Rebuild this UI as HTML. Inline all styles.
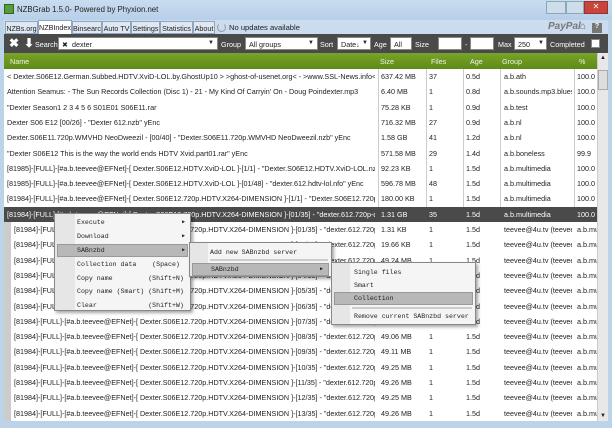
<!DOCTYPE html>
<html><head><meta charset="utf-8"><style>
*{margin:0;padding:0;box-sizing:border-box}
body{width:612px;height:428px;overflow:hidden;background:#bcd3ea;font-family:"Liberation Sans",sans-serif;font-size:7.2px;color:#222;position:relative}
.abs{position:absolute}
.title{left:0;top:0;width:612px;height:20px;background:linear-gradient(#c9dcf0,#b7cfe8)}
.tabs{left:4px;top:20px;width:604px;height:14px;background:#cbdcee}
.tab{position:absolute;top:21px;height:13px;border:1px solid #8ea6c0;background:#dfe8f2;font-size:7.2px;padding:2px 0 0 0;text-align:center;color:#222;white-space:nowrap;overflow:hidden}
.tb{left:4px;top:34px;width:604px;height:19px;background:#4a4a4a;color:#fff;font-size:7.2px}
.tb span{position:absolute;top:6px}
.inp{position:absolute;top:3px;height:13px;background:#fff;color:#222;font-size:7.2px;padding:2px 3px;border:1px solid #888;white-space:nowrap}
.hdr{left:4px;top:53px;width:593px;height:16px;background:linear-gradient(#78a42a,#5e8a17);color:#f2f2e6;font-size:7.2px}
.hdr span{position:absolute;top:4px}
.grid{left:4px;top:69px;width:593px;height:352px;background:#fff;overflow:hidden}
.row{position:absolute;left:0;width:593px;height:15.3px;white-space:nowrap}
.row span{position:absolute;top:3px;overflow:hidden}
.vl{position:absolute;top:0;width:1px;height:153px;background:#ccc}
.sb{left:597px;top:53px;width:11px;height:368px;background:#e8e8e8;border-left:1px solid #ccc}
.menu{position:absolute;background:#f5f5f5;border:1px solid #888;font-family:"Liberation Mono",monospace;font-size:6.6px;box-shadow:2px 2px 3px rgba(0,0,0,.35)}
.menu div{position:absolute;height:13px;padding:2px 0 0 0;white-space:nowrap}
.hl{background:#b8b8b8;border:1px solid #999}
</style></head><body>
<div class="abs title"></div>
<div class="abs" style="left:4px;top:4px;width:10px;height:10px;background:#5a9a3a;border:1px solid #2a6a1a"></div>
<div class="abs" style="left:17px;top:5px;font-size:7.8px">NZBGrab 1.5.0- Powered by Phyxion.net</div>
<div class="abs" style="left:546px;top:1px;width:20px;height:13px;background:#cfdcea;border:1px solid #8ab"></div>
<div class="abs" style="left:566px;top:1px;width:18px;height:13px;background:#cfdcea;border:1px solid #8ab"></div>
<div class="abs" style="left:584px;top:1px;width:24px;height:13px;background:#c9443a;border:1px solid #933;color:#fff;text-align:center;font-size:8px">✕</div>
<div class="abs tabs"></div>
<div class="tab" style="left:5px;width:33px">NZBs.org</div>
<div class="tab" style="left:38px;width:34px;background:#fff;top:20px;height:15px">NZBIndex</div>
<div class="tab" style="left:72px;width:30px">Binsearch</div>
<div class="tab" style="left:102px;width:29px">Auto TV</div>
<div class="tab" style="left:131px;width:29px">Settings</div>
<div class="tab" style="left:160px;width:33px">Statistics</div>
<div class="tab" style="left:193px;width:22px">About</div>
<div class="abs" style="left:217px;top:23px;width:9px;height:9px;border:1.5px solid #999;border-radius:50%;border-top-color:transparent"></div>
<div class="abs" style="left:229px;top:23px;font-size:7.6px">No updates available</div>
<div class="abs" style="left:548px;top:21px;font-size:10px;font-weight:bold;font-style:italic;color:#777">PayPal</div>
<div class="abs" style="left:580px;top:21px;font-size:10px;color:#666">⌂</div>
<div class="abs" style="left:592px;top:23px;width:10px;height:10px;background:#777;color:#fff;font-size:7px;text-align:center;font-weight:bold">?</div>
<div class="abs tb">
<span style="left:5px;top:2px;font-size:12px;font-weight:bold">✖</span>
<span style="left:20px;top:2px;font-size:12px;font-weight:bold">⬇</span>
<span style="left:31px">Search</span>
<div class="inp" style="left:54px;width:160px">✖ &nbsp;dexter<b style="position:absolute;right:3px;font-size:6px">▼</b></div>
<span style="left:217px">Group</span>
<div class="inp" style="left:241px;width:73px">All groups<b style="position:absolute;right:3px;font-size:6px">▼</b></div>
<span style="left:316px">Sort</span>
<div class="inp" style="left:333px;width:34px">Date↓<b style="position:absolute;right:2px;font-size:6px">▼</b></div>
<span style="left:370px">Age</span>
<div class="inp" style="left:386px;width:22px">All</div>
<span style="left:411px">Size</span>
<div class="inp" style="left:434px;width:24px"></div>
<span style="left:461px">-</span>
<div class="inp" style="left:466px;width:24px"></div>
<span style="left:494px">Max</span>
<div class="inp" style="left:510px;width:33px">250<b style="position:absolute;right:2px;font-size:6px">▼</b></div>
<span style="left:546px">Completed</span>
<div class="inp" style="left:587px;top:5px;width:9px;height:9px;padding:0"></div>
</div>
<div class="abs hdr"><span style="left:6px">Name</span><span style="left:376px">Size</span><span style="left:427px">Files</span><span style="left:466px">Age</span><span style="left:498px">Group</span><span style="left:575px">%</span></div>
<div class="abs sb"><div style="position:absolute;top:2px;left:2px;font-size:6px">▲</div><div style="position:absolute;top:17px;left:0;width:10px;height:20px;background:#ddd;border:1px solid #aaa"></div><div style="position:absolute;bottom:2px;left:2px;font-size:6px">▼</div></div>
<div class="abs grid" id="g">
<div class="vl" style="left:374px"></div><div class="vl" style="left:422px"></div><div class="vl" style="left:459px"></div><div class="vl" style="left:496px"></div><div class="vl" style="left:570px"></div>
</div>
<script>
var rowsTop=[
["< Dexter.S06E12.German.Subbed.HDTV.XviD-LOL.by.GhostUp10 > >ghost-of-usenet.org< - >www.SSL-News.info<","637.42 MB","37","0.5d","a.b.ath","100.0"],
["Attention Seamus: - The Sun Records Collection (Disc 1) - 21 - My Kind Of Carryin' On - Doug Poindexter.mp3","6.40 MB","1","0.8d","a.b.sounds.mp3.blues","100.0"],
["\"Dexter Season1 2 3 4 5 6 S01E01 S06E11.rar","75.28 KB","1","0.9d","a.b.test","100.0"],
["Dexter S06 E12 [00/26] - \"Dexter 612.nzb\" yEnc","716.32 MB","27","0.9d","a.b.nl","100.0"],
["Dexter.S06E11.720p.WMVHD NeoDweezil - [00/40] - \"Dexter.S06E11.720p.WMVHD NeoDweezil.nzb\" yEnc","1.58 GB","41","1.2d","a.b.nl","100.0"],
["\"Dexter S06E12 This is the way the world ends HDTV Xvid.part01.rar\" yEnc","571.58 MB","29","1.4d","a.b.boneless","99.9"],
["[81985]-[FULL]-[#a.b.teevee@EFNet]-[ Dexter.S06E12.HDTV.XviD-LOL ]-[1/1] - \"Dexter.S06E12.HDTV.XviD-LOL.nzb\"","92.23 KB","1","1.5d","a.b.multimedia","100.0"],
["[81985]-[FULL]-[#a.b.teevee@EFNet]-[ Dexter.S06E12.HDTV.XviD-LOL ]-[01/48] - \"dexter.612.hdtv-lol.nfo\" yEnc","596.78 MB","48","1.5d","a.b.multimedia","100.0"],
["[81984]-[FULL]-[#a.b.teevee@EFNet]-[ Dexter.S06E12.720p.HDTV.X264-DIMENSION ]-[1/1] - \"Dexter.S06E12.720p.","180.00 KB","1","1.5d","a.b.multimedia","100.0"],
["[81984]-[FULL]-[#a.b.teevee@EFNet]-[ Dexter.S06E12.720p.HDTV.X264-DIMENSION ]-[01/35] - \"dexter.612.720p-d","1.31 GB","35","1.5d","a.b.multimedia","100.0"]];
var sz=["1.31 KB","19.66 KB","49.24 MB","49.24 MB","49.24 MB","49.26 MB","49.25 MB","49.06 MB","49.11 MB","49.25 MB","49.26 MB","49.25 MB","49.26 MB"];
var h="";
rowsTop.forEach(function(r,i){var y=(i*15.3).toFixed(1);var s=i==9?"background:#4a4a4a;color:#fff;":"";
h+='<div class="row" style="top:'+y+'px;'+s+'"><span style="left:3px;width:368px">'+r[0].replace(/</g,"&lt;")+'</span><span style="left:377px">'+r[1]+'</span><span style="left:425px">'+r[2]+'</span><span style="left:462px">'+r[3]+'</span><span style="left:500px;width:68px">'+r[4]+'</span><span style="left:573px">'+r[5]+'</span></div>';});
sz.forEach(function(s,i){var n=("0"+(i+1)).slice(-2);var y=((i+10)*15.3).toFixed(1);
h+='<div class="row" style="top:'+y+'px;background:#fff"><span style="left:0;top:0;width:7px;height:16px;background:#ccc"></span><span style="left:10px;width:361px">[81984]-[FULL]-[#a.b.teevee@EFNet]-[ Dexter.S06E12.720p.HDTV.X264-DIMENSION ]-['+n+'/35] - "dexter.612.720p</span><span style="left:377px">'+s+'</span><span style="left:425px">1</span><span style="left:462px">1.5d</span><span style="left:500px;width:68px">teevee@4u.tv (teevee</span><span style="left:573px;width:20px">a.b.mu</span></div>';});
document.getElementById("g").insertAdjacentHTML("beforeend",h);
</script>
<div class="menu" style="left:54px;top:213px;width:137px;height:98px">
<div style="left:0;top:0;width:20px;height:96px;background:#e6e6e6"></div>
<div style="left:22px;top:3px">Execute</div><div style="left:127px;top:3px;font-size:5px">▶</div>
<div style="left:22px;top:17px">Download</div><div style="left:127px;top:17px;font-size:5px">▶</div>
<div class="hl" style="left:2px;top:30px;width:131px;padding-left:19px">SABnzbd<span style="position:absolute;left:124px;font-size:5px">▶</span></div>
<div style="left:22px;top:45px">Collection data &nbsp;&nbsp;&nbsp;(Space)</div>
<div style="left:22px;top:59px">Copy name &nbsp;&nbsp;&nbsp;&nbsp;&nbsp;&nbsp;&nbsp;&nbsp;(Shift+N)</div>
<div style="left:22px;top:72px">Copy name (Smart) (Shift+M)</div>
<div style="left:22px;top:86px">Clear &nbsp;&nbsp;&nbsp;&nbsp;&nbsp;&nbsp;&nbsp;&nbsp;&nbsp;&nbsp;&nbsp;&nbsp;(Shift+W)</div>
</div>
<div class="menu" style="left:189px;top:242px;width:143px;height:35px">
<div style="left:0;top:0;width:18px;height:33px;background:#e6e6e6"></div>
<div style="left:20px;top:4px">Add new SABnzbd server</div>
<div style="left:20px;top:16px;width:118px;height:1px;background:#ccc"></div>
<div class="hl" style="left:2px;top:20px;width:137px;padding-left:18px">SABnzbd<span style="position:absolute;left:127px;font-size:5px">▶</span></div>
</div>
<div class="menu" style="left:331px;top:262px;width:145px;height:63px">
<div style="left:0;top:0;width:18px;height:61px;background:#e6e6e6"></div>
<div style="left:22px;top:4px">Single files</div>
<div style="left:22px;top:17px">Smart</div>
<div class="hl" style="left:2px;top:29px;width:139px;padding-left:19px">Collection</div>
<div style="left:20px;top:44px;width:120px;height:1px;background:#ccc"></div>
<div style="left:22px;top:48px">Remove current SABnzbd server</div>
</div>
</body></html>
